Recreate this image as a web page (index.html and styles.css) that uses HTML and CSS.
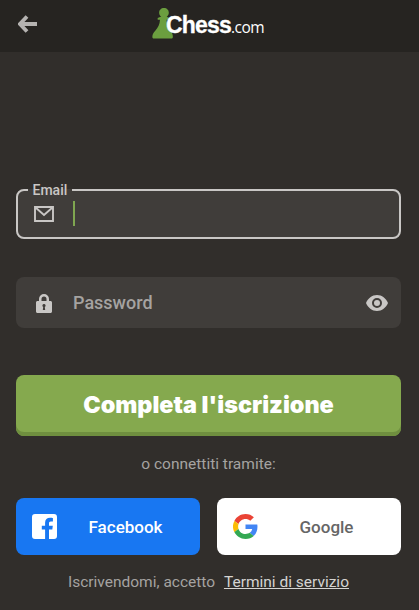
FILE: index.html
```html
<!DOCTYPE html>
<html lang="it">
<head>
    <meta charset="UTF-8">
    <meta name="viewport" content="width=device-width, initial-scale=1.0">
    <title>Chess.com</title>
    <link rel="stylesheet" href="styles.css">
</head>
<body>

    <!-- Header -->
    <div class="header">
        <svg class="back-icon" viewBox="0 0 20 18" aria-hidden="true">
            <path d="M9 1.500 2 9l7 7.500M3 9h16" fill="none" stroke="#b5b3b1" stroke-width="3.800"/>
        </svg>
        <div class="logo">
            <svg class="pawn" viewBox="0 0 22 32" aria-hidden="true">
                <path d="M12 0c3 0 5 2.200 5 4.800 0 1.700-.9 3.200-2.200 4l2.700 1.500v1.700h-2.800c.2 4.600 1.500 8 4.300 11.400 1.400 1.800 2.200 4 2.200 6.600 0 .9-.5 1.600-1.500 1.600H1.500c-1 0-1.500-.7-1.500-1.600 0-2.600 1-4.800 3-6.600C6 20 7.600 16.600 7.900 12H5.500v-1.700l3.700-1.500C7.900 8 7 6.500 7 4.800 7 2.200 9 0 12 0z" fill="#6b9e3f"/>
            </svg>
            <span class="logo-name">Chess</span><span class="logo-com">.com</span>
        </div>
    </div>

    <!-- Form -->
    <div class="main-container">
        <fieldset class="field field-active">
            <legend>Email</legend>
            <svg class="mail-icon" viewBox="0 0 20 16" aria-hidden="true">
                <path d="M1 1h18v14H1zM1.500 1.500 10 9l8.500-7.500" fill="none" stroke="#c9c7c5" stroke-width="1.900"/>
            </svg>
            <span class="caret"></span>
        </fieldset>

        <div class="field field-password">
            <svg class="lock-icon" viewBox="0 0 16 20" aria-hidden="true">
                <path fill-rule="evenodd" d="M3 8V6a5 5 0 0 1 10 0v2h1.500c.8 0 1.500.7 1.500 1.500v9c0 .8-.7 1.500-1.500 1.500h-13C.7 20 0 19.300 0 18.500v-9C0 8.700.7 8 1.500 8zm2.500 0h5V6a2.500 2.500 0 0 0-5 0zM8 11a1.600 1.600 0 0 0-.8 3l-.4 3h2.400l-.4-3A1.600 1.600 0 0 0 8 11z" fill="#c9c7c5"/>
            </svg>
            <span class="placeholder">Password</span>
            <svg class="eye-icon" viewBox="0 0 22 16" aria-hidden="true">
                <path fill-rule="evenodd" d="M11 0c5 0 9 3.300 11 8-2 4.700-6 8-11 8S2 12.700 0 8c2-4.700 6-8 11-8zm0 3a5 5 0 1 0 0 10 5 5 0 0 0 0-10zm0 2a3 3 0 1 1 0 6 3 3 0 0 1 0-6z" fill="#c9c7c5"/>
            </svg>
        </div>

        <button class="submit-button">Completa l'iscrizione</button>

        <p class="connect-text">o connettiti tramite:</p>

        <div class="social-row">
            <button class="social-button facebook">
                <svg class="social-icon" viewBox="0 0 25 25" aria-hidden="true">
                    <path d="M3 0h19a3 3 0 0 1 3 3v19a3 3 0 0 1-3 3h-5v-9.500h3.300l.5-3.800H17V9.300c0-1.100.4-1.900 1.900-1.900h2V4c-.5-.1-1.600-.2-2.900-.2-2.900 0-4.900 1.800-4.900 5v2.900H9.800v3.800h3.300V25H3a3 3 0 0 1-3-3V3a3 3 0 0 1 3-3z" fill="#fff"/>
                </svg>
                <span class="social-label">Facebook</span>
            </button>
            <button class="social-button google">
                <svg class="social-icon" viewBox="0 0 48 48" aria-hidden="true">
                    <path fill="#EA4335" d="M24 9.500c3.500 0 6.700 1.200 9.200 3.600l6.900-6.900C35.900 2.400 30.500 0 24 0 14.600 0 6.500 5.400 2.600 13.200l8 6.200C12.500 13.700 17.800 9.500 24 9.500z"/>
                    <path fill="#4285F4" d="M47 24.500c0-1.600-.1-3.100-.4-4.500H24v9h12.900c-.6 3-2.200 5.500-4.800 7.200l7.700 6C44.300 38 47 31.800 47 24.500z"/>
                    <path fill="#FBBC05" d="M10.600 28.600a14.500 14.500 0 0 1 0-9.200l-8-6.200a24 24 0 0 0 0 21.600z"/>
                    <path fill="#34A853" d="M24 48c6.500 0 11.900-2.100 15.800-5.800l-7.700-6c-2.100 1.400-4.900 2.300-8.100 2.300-6.200 0-11.500-4.200-13.400-9.900l-8 6.200C6.500 42.600 14.600 48 24 48z"/>
                </svg>
                <span class="social-label">Google</span>
            </button>
        </div>

        <p class="terms">Iscrivendomi, accetto <a href="#">Termini di servizio</a></p>
    </div>

</body>
</html>
```

FILE: styles.css
```css
body {
    margin: 0;
    background-color: #312e2b;
    font-family: Roboto, Arial, sans-serif;
    overflow: hidden;
}
/* Header */
.header {
    height: 52px;
    background-color: #262421;
    display: flex;
    align-items: center;
    justify-content: center;
    position: relative;
}
.back-icon {
    width: 20px;
    height: 18px;
    position: absolute;
    left: 18px;
    top: 15px;
}
.logo {
    display: flex;
    align-items: baseline;
    color: white;
    margin-left: -3px;
    margin-top: 1px;
}
.pawn {
    width: 22px;
    height: 31px;
    align-self: flex-end;
    margin-right: -8px;
    margin-bottom: 6px;
}
.logo-name {
    margin-top: 4px;
    font-family: "Liberation Sans", Arial, sans-serif;
    font-weight: 700;
    font-size: 23px;
    letter-spacing: -0.8px;
    -webkit-text-stroke: 0.3px white;
}
.logo-com {
    font-family: "Open Sans", Arial, sans-serif;
    font-size: 15.5px;
    letter-spacing: -0.5px;
}
/* Main container */
.main-container {
    padding: 131px 18px 0 16px;
}
.field {
    box-sizing: border-box;
    background-color: #403d3a;
    border-radius: 8px;
    display: flex;
    align-items: center;
    margin: 0;
}
.field-active {
    height: 56px;
    min-width: 0;
    border: 2px solid #c9c7c5;
    padding: 0 0 7px 16px;
}
.field-active legend {
    margin-left: -6px;
    padding: 0 4.5px;
    font-size: 14px;
    line-height: 14px;
    font-weight: 500;
    color: #c9c7c5;
}
.mail-icon {
    width: 20px;
    height: 16px;
}
.caret {
    width: 2px;
    height: 25px;
    margin-left: 19px;
    background-color: #7fa650;
}
.field-password {
    height: 51px;
    margin-top: 38px;
    padding: 0 13px 0 20px;
}
.lock-icon {
    width: 16px;
    height: 20px;
}
.placeholder {
    flex: 1;
    margin-left: 21px;
    font-size: 18px;
    font-weight: 500;
    color: #a5a3a1;
}
.eye-icon {
    width: 22px;
    height: 16px;
}
/* Submit button */
.submit-button {
    display: block;
    width: 100%;
    height: 61px;
    margin-top: 47px;
    padding: 0 0 3px;
    border: none;
    border-radius: 8px;
    background-color: #85a94e;
    box-shadow: inset 0 -4px 0 #6f8f3f;
    color: white;
    font-family: Inter, Arial, sans-serif;
    font-size: 23.4px;
    font-weight: 900;
}
.connect-text {
    margin: 19px 0 0;
    font-size: 15.5px;
    line-height: 19px;
    text-align: center;
    color: #a5a3a1;
}
/* Social buttons */
.social-row {
    display: flex;
    gap: 17px;
    margin-top: 24px;
}
.social-button {
    flex: 1;
    height: 57px;
    display: flex;
    align-items: center;
    padding: 0 6px 0 16px;
    border: none;
    border-radius: 8px;
    font-family: Roboto, Arial, sans-serif;
    font-size: 17px;
    font-weight: 500;
}
.social-icon {
    width: 25px;
    height: 25px;
}
.social-label {
    flex: 1;
    text-align: center;
}
.facebook {
    background-color: #1877f2;
    color: white;
}
.google {
    background-color: white;
    color: #666666;
}
.terms {
    margin: 18px 0 0;
    font-size: 15.5px;
    line-height: 19px;
    text-align: center;
    color: #a5a3a1;
}
.terms a {
    margin-left: 5px;
    color: #d5d4d2;
}
```
